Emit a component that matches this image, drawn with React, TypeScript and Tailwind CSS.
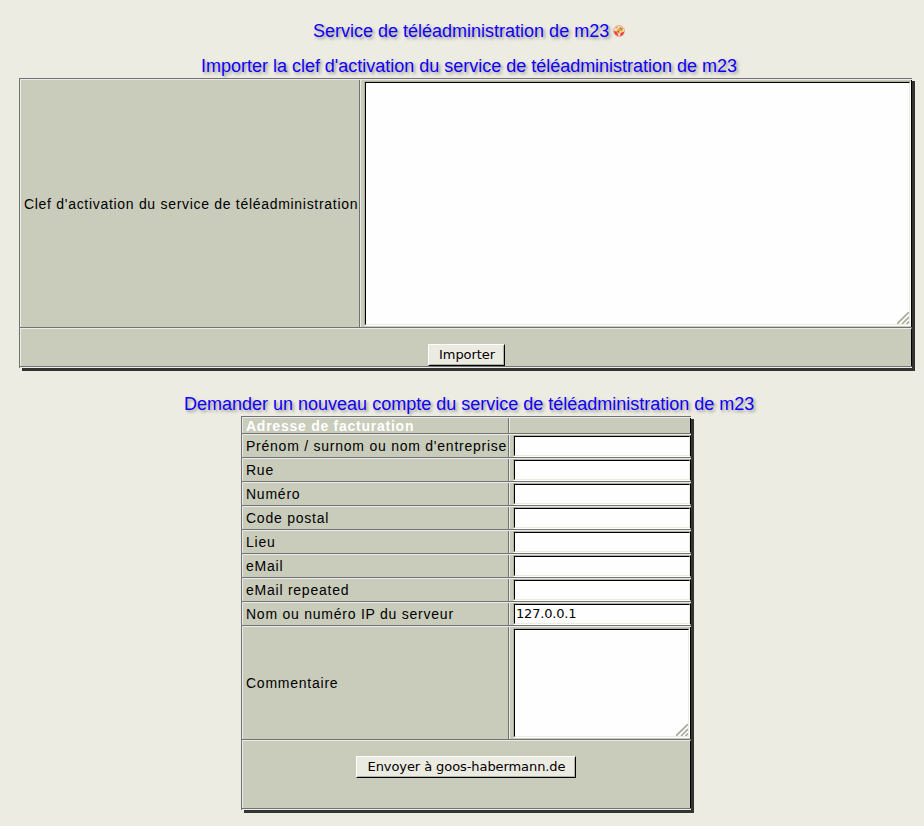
import React from 'react';

const rows = [
  { label: "Prénom / surnom ou nom d'entreprise", value: '' },
  { label: 'Rue', value: '' },
  { label: 'Numéro', value: '' },
  { label: 'Code postal', value: '' },
  { label: 'Lieu', value: '' },
  { label: 'eMail', value: '' },
  { label: 'eMail repeated', value: '' },
  { label: 'Nom ou numéro IP du serveur', value: '127.0.0.1' },
];

const titleClass =
  "whitespace-nowrap text-[18px] leading-[20px] text-[#1000f4] [text-shadow:2px_2px_3px_#999]";

const labelClass =
  'flex items-center whitespace-nowrap border-l border-[#ebebeb] pl-[3px] text-[14px] leading-4';

function Sunken({ className, children }: { className: string; children?: React.ReactNode }) {
  return (
    <div className={`border border-t-[#b0b39e] border-l-[#b0b39e] border-r-white border-b-white ${className}`}>
      <div className="flex h-full w-full items-center border border-t-black border-l-black border-r-[#ecebe2] border-b-[#ecebe2] bg-[#fefefe]">
        {children}
      </div>
    </div>
  );
}

function Grip() {
  return (
    <svg className="h-[12px] w-[12px]" viewBox="0 0 12 12" fill="none" stroke="#a5a893" strokeWidth="1.6">
      <path d="M0 12L12 0M5 12L12 5M9.500 12L12 9.500" />
    </svg>
  );
}

function Button({ className, children }: { className: string; children: React.ReactNode }) {
  return (
    <button className={`h-[22px] border border-t-white border-l-white border-r-black border-b-black ${className}`}>
      <span className="flex h-full w-full items-center justify-center whitespace-nowrap border border-t-[#ecebe2] border-l-[#ecebe2] border-r-[#b0b39e] border-b-[#b0b39e] bg-[#ecebe2] pb-px pl-px font-['DejaVu_Sans',sans-serif] text-[13px] leading-4 tracking-[-0.08px] text-black">
        {children}
      </span>
    </button>
  );
}

function Ball() {
  return (
    <svg className="h-[12px] w-[12px]" viewBox="0 0 12 12">
      <circle cx="6" cy="6" r="5.500" fill="#f9dccf" stroke="#dda184" strokeWidth=".8" />
      <path d="M.8 6L4 6.500l1.500 4.700Q1.500 10.500 .8 6M7.500 8l3.700-1.500Q11 10.500 7 11.300" fill="#f04440" />
      <path d="M2 3L5 1 4 3.500z" fill="#ee8a5c" />
      <path d="M3.500 5.500L7 2l3 1-.5 3.500-2.500-.5L6 9 4.500 7.500z" fill="#e3a92f" />
      <path d="M7.200 3l1.500 1M5 6l1 1.500" stroke="#75502b" strokeWidth=".9" />
    </svg>
  );
}

export default function App() {
  return (
    <div className="h-[826px] w-[924px] overflow-hidden bg-[#edece3] pt-[21px] font-['Liberation_Sans',Arial,sans-serif] text-black">
      <div className="ml-[313px] flex items-center">
        <h1 className={titleClass}>Service de téléadministration de m23</h1>
        <span className="ml-[4px]"><Ball /></span>
      </div>
      <h2 className={`mt-[15px] ml-[201px] tracking-[-0.01px] ${titleClass}`}>
        Importer la clef d'activation du service de téléadministration de m23
      </h2>

      <section className="mt-[2px] ml-[19px] flex h-[290px] w-[893px] flex-col border-t border-l border-[#707371] bg-[#c9ccbb] shadow-[3px_3px_0_#333430]">
        <div className="flex h-[248px] border-t border-[#ebebeb]">
          <div className={`w-[339px] tracking-[0.7px] ${labelClass}`}>
            Clef d'activation du service de téléadministration
          </div>
          <div className="flex flex-1 border-l border-l-[#707371] border-r border-r-black">
            <div className="flex-1 border-l border-[#ebebeb] pt-[1px] pl-[3px]">
              <Sunken className="h-[245px] w-[547px]">
                <div className="flex h-full w-full items-end justify-end"><Grip /></div>
              </Sunken>
            </div>
          </div>
        </div>
        <div className="h-[40px] border-t border-b border-[#707371]">
          <div className="flex h-full border-t border-l border-t-[#ebebeb] border-l-[#ebebeb] border-r border-r-black pt-[15px] pl-[407px]">
            <Button className="w-[77px]">Importer</Button>
          </div>
        </div>
        <div className="h-px bg-[#ebebeb]" />
      </section>

      <h2 className={`mt-[26px] ml-[184px] ${titleClass}`}>
        Demander un nouveau compte du service de téléadministration de m23
      </h2>

      <section className="mt-[2px] ml-[241px] flex h-[394px] w-[450px] flex-col border-t border-l border-[#707371] bg-[#c9ccbb] shadow-[3px_3px_0_#333430]">
        <div className="flex h-[16px] border-t border-[#ebebeb]">
          <div className={`w-[266px] font-bold tracking-[0.75px] text-white ${labelClass}`}>
            Adresse de facturation
          </div>
          <div className="flex flex-1 border-l border-l-[#707371] border-r border-r-black">
            <div className="flex-1 border-l border-[#ebebeb]" />
          </div>
        </div>
        {rows.map((row) => (
          <div key={row.label} className="h-[24px] border-t border-[#707371]">
            <div className="flex h-full border-t border-[#ebebeb]">
              <div className={`w-[266px] tracking-[0.76px] ${labelClass}`}>{row.label}</div>
              <div className="flex flex-1 border-l border-[#707371]">
                <div className="flex-1 border-l border-[#ebebeb] pl-[3px]">
                  <div className="h-[22px] w-[178px] border border-t-[#b0b39e] border-l-[#b0b39e] border-r-black border-b-white">
                    <div className="flex h-full items-center border border-t-black border-l-black border-r-[#ecebe2] border-b-[#ecebe2] bg-[#fefefe] pl-px pb-px font-['DejaVu_Sans',sans-serif] text-[13px] leading-4 tracking-[-0.2px]">
                      {row.value}
                    </div>
                  </div>
                </div>
              </div>
            </div>
          </div>
        ))}
        <div className="h-[114px] border-t border-[#707371]">
          <div className="flex h-full border-t border-[#ebebeb]">
            <div className={`w-[266px] tracking-[0.76px] ${labelClass}`}>Commentaire</div>
            <div className="flex flex-1 border-l border-l-[#707371] border-r border-r-black">
              <div className="flex-1 border-l border-[#ebebeb] pt-[1px] pl-[3px]">
                <Sunken className="h-[110px] w-[177px]">
                  <div className="flex h-full w-full items-end justify-end"><Grip /></div>
                </Sunken>
              </div>
            </div>
          </div>
        </div>
        <div className="h-[70px] border-t border-b border-[#707371]">
          <div className="flex h-full border-t border-l border-t-[#ebebeb] border-l-[#ebebeb] border-r border-r-black pt-[15px] pl-[113px]">
            <Button className="w-[220px]">Envoyer à goos-habermann.de</Button>
          </div>
        </div>
        <div className="h-px bg-[#ebebeb]" />
      </section>
    </div>
  );
}
